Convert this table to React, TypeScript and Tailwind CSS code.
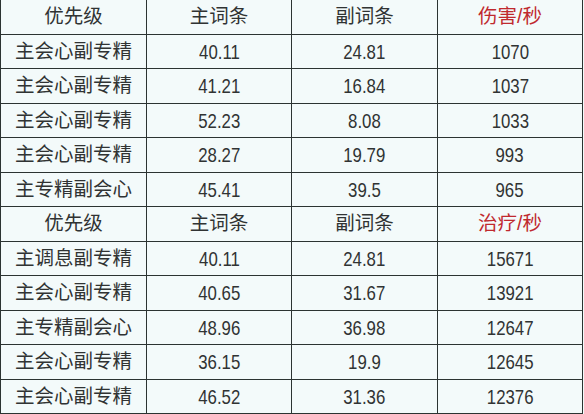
const sections = [
  {
    stat: "伤害/秒",
    rows: [
      ["主会心副专精", "40.11", "24.81", "1070"],
      ["主会心副专精", "41.21", "16.84", "1037"],
      ["主会心副专精", "52.23", "8.08", "1033"],
      ["主会心副专精", "28.27", "19.79", "993"],
      ["主专精副会心", "45.41", "39.5", "965"],
    ],
  },
  {
    stat: "治疗/秒",
    rows: [
      ["主调息副专精", "40.11", "24.81", "15671"],
      ["主会心副专精", "40.65", "31.67", "13921"],
      ["主专精副会心", "48.96", "36.98", "12647"],
      ["主会心副专精", "36.15", "19.9", "12645"],
      ["主会心副专精", "46.52", "31.36", "12376"],
    ],
  },
];

function Row({ cells, header }: { cells: string[]; header?: boolean }) {
  return (
    <div className="grid grid-cols-[147px_145px_146px_145px] h-[34.5px] border-b-[1.5px] border-[#2b3331]">
      {cells.map((c, i) => {
        const numeric = !header && i > 0;
        return (
          <div
            key={i}
            className={
              "flex items-center justify-center border-r-[1.5px] border-[#2b3331] " +
              (i === 0 ? "border-l-[1.5px] " : "") +
              (header && i === 3 ? "text-[#c0292e]" : "text-[#303333]")
            }
          >
            {numeric ? (
              <span className="inline-block text-[21px] scale-x-[0.8]">{c}</span>
            ) : (
              <span className="text-[19.5px]">{c}</span>
            )}
          </div>
        );
      })}
    </div>
  );
}

export default function App() {
  return (
    <div
      className="w-[584px] h-[414px] overflow-hidden bg-[#f3fafa] leading-none"
      style={{ fontFamily: '"Liberation Sans", "Noto Sans CJK SC", sans-serif' }}
    >
      <div className="flex flex-col w-[583px]">
        {sections.map((s) => (
          <div key={s.stat} className="flex flex-col">
            <Row header cells={["优先级", "主词条", "副词条", s.stat]} />
            {s.rows.map((r, i) => (
              <Row key={i} cells={r} />
            ))}
          </div>
        ))}
      </div>
    </div>
  );
}
